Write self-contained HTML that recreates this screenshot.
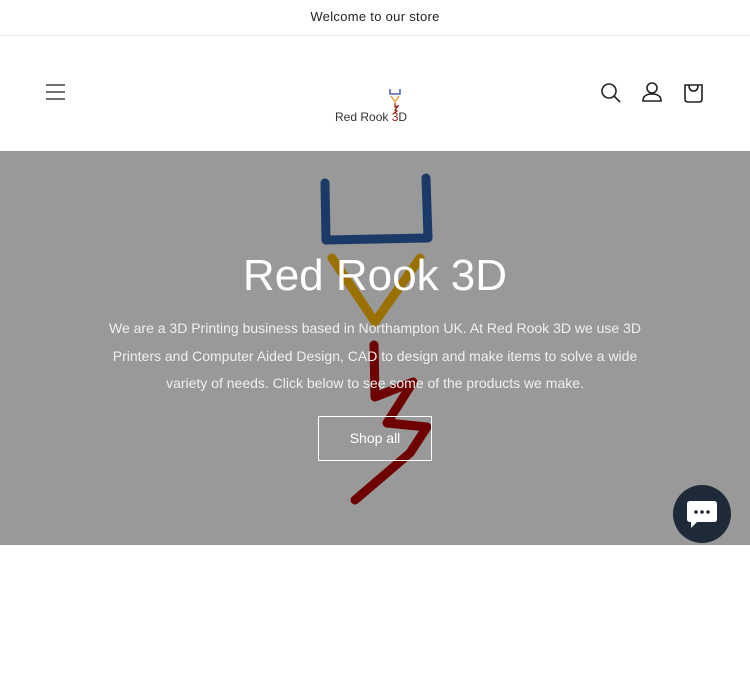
<!DOCTYPE html>
<html><head><meta charset="utf-8"><style>
*{margin:0;padding:0;box-sizing:border-box}
body{width:750px;height:563px;background:#fff;font-family:"Liberation Sans",sans-serif;overflow:hidden;position:relative}
.ann{height:36px;border-bottom:1px solid #e6e6e6;text-align:center;font-size:13px;line-height:34px;color:#222;letter-spacing:.3px}
.hero{position:absolute;top:151px;left:0;width:750px;height:394px;background:#999}
.t{position:absolute;left:0;width:750px;text-align:center;color:#fff}
</style></head><body>
<div class="ann">Welcome to our store</div>
<svg style="position:absolute;left:46px;top:84px" width="20" height="17"><g stroke="#444" stroke-width="1.6"><line x1="0" y1="1" x2="19" y2="1"/><line x1="0" y1="8" x2="19" y2="8"/><line x1="0" y1="15" x2="19" y2="15"/></g></svg>
<svg style="position:absolute;left:600px;top:82px" width="110" height="24" fill="none" stroke="#222" stroke-width="1.6">
<circle cx="9" cy="9" r="7"/><line x1="14" y1="14" x2="20" y2="20"/>
<circle cx="52" cy="6" r="5"/><path d="M43 19 Q43 12 52 12 Q61 12 61 19 Z"/>
<path d="M85 3 H102 V17 Q102 20 99 20 H88 Q85 20 85 17 Z"/><path d="M89 3 Q89 9 93.5 9 Q98 9 98 3"/>
</svg>
<div style="position:absolute;left:335px;top:110px;font-size:12px;color:#333">Red Rook <span style="color:#8b1a10">3</span>D</div>
<svg style="position:absolute;left:388px;top:88px" width="14" height="26" fill="none" stroke-width="1.3"><path d="M2 1 V6 H12 V1" stroke="#2a4a9a"/><path d="M3 8 L7 14 L11 8" stroke="#e0a030"/><path d="M7 15 V19 L10 18 L7 22 L9 23 L5 26" stroke="#a02010"/></svg>
<div class="hero">
<svg style="position:absolute;left:0;top:-151px" width="750" height="700" fill="none" stroke-linecap="round" stroke-linejoin="round" stroke-width="9">
<path d="M325 183 L326 240 L428 238 L426 178" stroke="#1c3a68"/>
<path d="M332 258 L375 322 L420 258" stroke="#9a7000"/>
<path d="M374 345 L375 397 L413 382 L387 423 L427 427 L410 453 L355 500" stroke="#6e0000"/>
</svg>
<div class="t" style="top:100px;font-size:44px">Red Rook 3D</div>
<div class="t" style="top:164px;font-size:14px;line-height:27.5px;color:#f0f0f0;padding:0 92px">We are a 3D Printing business based in Northampton UK. At Red Rook 3D we use 3D Printers and Computer Aided Design, CAD to design and make items to solve a wide variety of needs. Click below to see some of the products we make.</div>
<div style="position:absolute;left:318px;top:265px;width:114px;height:45px;border:1px solid #fff;color:#fff;font-size:14px;text-align:center;line-height:43px">Shop all</div>
</div>
<div style="position:absolute;left:673px;top:485px;width:58px;height:58px;border-radius:50%;background:#1f2a38"></div>
<svg style="position:absolute;left:685px;top:499px" width="34" height="32"><path d="M5 2 H29 Q32 2 32 5 V20 Q32 23 29 23 H12 L6 29 V23 H5 Q2 23 2 20 V5 Q2 2 5 2Z" fill="#fff"/><g fill="#1f2a38"><circle cx="11" cy="13" r="1.8"/><circle cx="17" cy="13" r="1.8"/><circle cx="23" cy="13" r="1.8"/></g></svg>
</body></html>
